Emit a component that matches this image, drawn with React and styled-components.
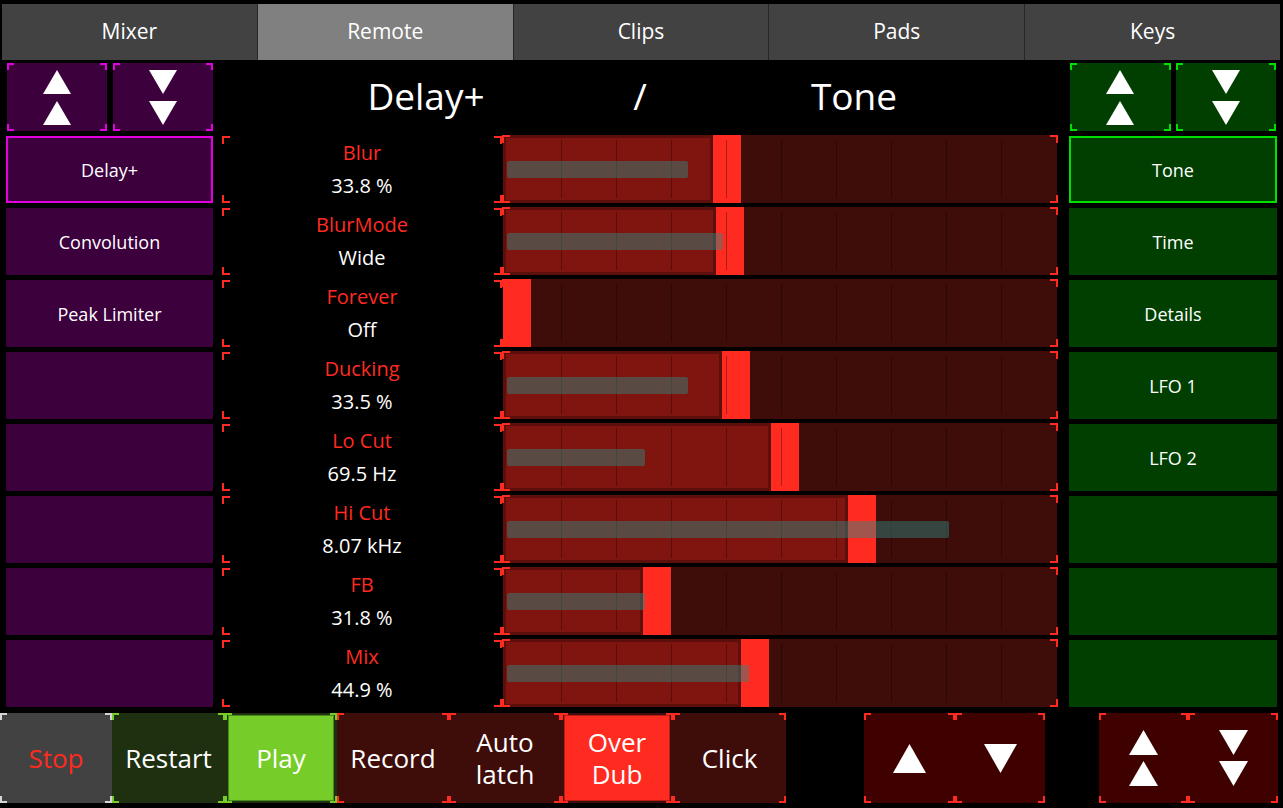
import React from 'react';
import styled, { createGlobalStyle, css } from 'styled-components';

const GlobalStyle = createGlobalStyle`
  html, body {
    margin: 0;
    padding: 0;
    background: #000;
  }
  body {
    font-family: "Open Sans", "DejaVu Sans", sans-serif;
    color: #fff;
    overflow: hidden;
  }
`;

const RED = '#ff2a20';
const MAGENTA = '#e000e0';
const GREEN = '#00e000';

// corner brackets drawn as background gradients
const brackets = (color, len = 8, th = 2) => css`
  background-image:
    linear-gradient(${color}, ${color}), linear-gradient(${color}, ${color}),
    linear-gradient(${color}, ${color}), linear-gradient(${color}, ${color}),
    linear-gradient(${color}, ${color}), linear-gradient(${color}, ${color}),
    linear-gradient(${color}, ${color}), linear-gradient(${color}, ${color});
  background-size:
    ${len}px ${th}px, ${th}px ${len}px, ${len}px ${th}px, ${th}px ${len}px,
    ${len}px ${th}px, ${th}px ${len}px, ${len}px ${th}px, ${th}px ${len}px;
  background-position:
    left top, left top, right top, right top,
    left bottom, left bottom, right bottom, right bottom;
  background-repeat: no-repeat;
`;

const Page = styled.div`
  width: 1283px;
  height: 808px;
  display: flex;
  flex-direction: column;
`;

const TabBar = styled.div`
  display: grid;
  grid-template-columns: repeat(5, 1fr);
  gap: 1px;
  height: 56px;
  margin: 4px 3px 0 2px;
  background: #262626;
`;

const Tab = styled.div`
  display: flex;
  align-items: center;
  justify-content: center;
  background: ${p => (p.$active ? '#808080' : '#424242')};
  font-size: 21px;
  padding-bottom: 2px;
`;

const Main = styled.div`
  display: grid;
  grid-template-columns: 207px 856px 208px;
  grid-template-rows: 68px repeat(8, 67px);
  row-gap: 5px;
  padding: 3px 0 0 6px;
`;

const NavPair = styled.div`
  display: grid;
  grid-template-columns: 1fr 1fr;
  gap: ${p => p.$gap}px;
  padding-left: 1px;
  padding-right: ${p => (p.$right ? 1 : 0)}px;
`;

const NavButton = styled.div`
  display: flex;
  align-items: center;
  justify-content: center;
  background-color: ${p => p.$bg};
  ${p => brackets(p.$edge, 7, 2)}
`;

const Header = styled.div`
  display: grid;
  grid-template-columns: repeat(3, 214px);
  justify-content: center;
  align-items: center;
  padding: 0 11px 4px 9px;
  font-size: 37px;
  text-align: center;
`;

const ListItem = styled.div`
  display: flex;
  align-items: center;
  justify-content: center;
  background: ${p => p.$bg};
  border: 2px solid ${p => (p.$selected ? p.$edge : 'transparent')};
  font-size: 18px;
`;

const ParamRow = styled.div`
  display: grid;
  grid-template-columns: 280px 1fr;
  padding: 0 11px 0 9px;
`;

const Label = styled.div`
  display: flex;
  flex-direction: column;
  align-items: center;
  justify-content: center;
  gap: 6px;
  padding-bottom: 2px;
  ${brackets(RED, 8, 2)}
`;

const ParamName = styled.div`
  color: ${RED};
  font-size: 20px;
  line-height: 27px;
`;

const ParamValue = styled.div`
  font-size: 20px;
  line-height: 27px;
`;

const SliderCell = styled.div`
  position: relative;
  padding: 0 1px;
  margin-top: -1px;

  &::after {
    content: '';
    position: absolute;
    inset: 0;
    pointer-events: none;
    ${brackets(RED, 8, 2)}
  }
`;

const Track = styled.div`
  position: relative;
  height: 100%;
  background: #3e0c09;
  overflow: hidden;
`;

const Fill = styled.div`
  position: absolute;
  left: 0;
  top: 0;
  bottom: 0;
  background: #801510;
  box-shadow: inset 0 0 0 3px #5c0f0b;
`;

const Handle = styled.div`
  position: absolute;
  top: 0;
  bottom: 0;
  width: 28px;
  background: ${RED};
`;

const Ticks = styled.div`
  position: absolute;
  top: 5px;
  bottom: 5px;
  left: 4px;
  right: 3px;
  background: repeating-linear-gradient(
    90deg,
    transparent 0,
    transparent 54px,
    rgba(0, 0, 0, 0.32) 54px,
    rgba(0, 0, 0, 0.32) 55px
  );
`;

const Mod = styled.div`
  position: absolute;
  left: 4px;
  top: 26px;
  height: 17px;
  border-radius: 2px;
  background: rgba(44, 140, 134, 0.45);
`;

const BottomBar = styled.div`
  display: flex;
  height: 90px;
  margin-top: 6px;
`;

const Group = styled.div`
  display: flex;
  margin-left: ${p => p.$offset || 0}px;
`;

const TransportButton = styled.div`
  width: ${p => p.$w || 112}px;
  display: flex;
  padding: 2px 3px;
  box-sizing: border-box;
  background-color: ${p => p.$bg};
  ${p => brackets(p.$edge, 7, 2)}
`;

const Face = styled.div`
  flex: 1;
  display: flex;
  align-items: center;
  justify-content: center;
  text-align: center;
  font-size: 26px;
  line-height: 32px;
  color: ${p => p.$color || '#fff'};
  background: ${p => p.$lit || 'transparent'};
  border: 1px solid ${p => p.$rim || 'transparent'};
`;

const Arrows = ({ up, double, w = 28, h = 24, gap = 7 }) => {
  const tri = y =>
    up
      ? `${w / 2},${y} ${w},${y + h} 0,${y + h}`
      : `0,${y} ${w},${y} ${w / 2},${y + h}`;
  const total = double ? h * 2 + gap : h;
  return (
    <svg width={w} height={total} viewBox={`0 0 ${w} ${total}`}>
      <polygon points={tri(0)} fill="#fff" />
      {double && <polygon points={tri(h + gap)} fill="#fff" />}
    </svg>
  );
};

const params = [
  { name: 'Blur', value: '33.8 %', handle: 210, mod: 181 },
  { name: 'BlurMode', value: 'Wide', handle: 213, mod: 216 },
  { name: 'Forever', value: 'Off', handle: 0, mod: 0 },
  { name: 'Ducking', value: '33.5 %', handle: 219, mod: 181 },
  { name: 'Lo Cut', value: '69.5 Hz', handle: 268, mod: 138 },
  { name: 'Hi Cut', value: '8.07 kHz', handle: 345, mod: 442 },
  { name: 'FB', value: '31.8 %', handle: 140, mod: 138 },
  { name: 'Mix', value: '44.9 %', handle: 238, mod: 242 },
];

const devices = ['Delay+', 'Convolution', 'Peak Limiter', '', '', '', '', ''];
const pages = ['Tone', 'Time', 'Details', 'LFO 1', 'LFO 2', '', '', ''];
const tabs = ['Mixer', 'Remote', 'Clips', 'Pads', 'Keys'];

const PURPLE = '#3c003c';
const DKGREEN = '#003f00';
const DKRED = '#3e0c09';
const NAVRED = '#3f0000';

export default function App() {
  return (
    <Page>
      <GlobalStyle />
      <TabBar>
        {tabs.map(t => (
          <Tab key={t} $active={t === 'Remote'}>{t}</Tab>
        ))}
      </TabBar>

      <Main>
        <NavPair $gap={6}>
          <NavButton $bg={PURPLE} $edge={MAGENTA}>
            <Arrows up double />
          </NavButton>
          <NavButton $bg={PURPLE} $edge={MAGENTA}>
            <Arrows double />
          </NavButton>
        </NavPair>
        <Header>
          <span>Delay+</span>
          <span>/</span>
          <span>Tone</span>
        </Header>
        <NavPair $gap={5} $right>
          <NavButton $bg={DKGREEN} $edge={GREEN}>
            <Arrows up double />
          </NavButton>
          <NavButton $bg={DKGREEN} $edge={GREEN}>
            <Arrows double />
          </NavButton>
        </NavPair>

        {params.map((p, i) => (
          <React.Fragment key={p.name}>
            <ListItem $bg={PURPLE} $edge={MAGENTA} $selected={i === 0}>
              {devices[i]}
            </ListItem>
            <ParamRow>
              <Label>
                <ParamName>{p.name}</ParamName>
                <ParamValue>{p.value}</ParamValue>
              </Label>
              <SliderCell>
                <Track>
                  <Fill style={{ width: p.handle }} />
                  <Handle style={{ left: p.handle }} />
                  <Ticks />
                  {p.mod > 0 && <Mod style={{ width: p.mod }} />}
                </Track>
              </SliderCell>
            </ParamRow>
            <ListItem $bg={DKGREEN} $edge={GREEN} $selected={i === 0}>
              {pages[i]}
            </ListItem>
          </React.Fragment>
        ))}
      </Main>

      <BottomBar>
        <Group>
          <TransportButton $bg="#424242" $edge="#d6d6d6">
            <Face $color={RED}>Stop</Face>
          </TransportButton>
          <TransportButton $w={113} $bg="#1e300f" $edge="#76cc28">
            <Face>Restart</Face>
          </TransportButton>
          <TransportButton $bg="#1e300f" $edge="#76cc28">
            <Face $lit="#76cc28" $rim="#4b8a1c">Play</Face>
          </TransportButton>
          <TransportButton $bg={DKRED} $edge={RED}>
            <Face>Record</Face>
          </TransportButton>
          <TransportButton $bg={DKRED} $edge={RED}>
            <Face>Auto<br />latch</Face>
          </TransportButton>
          <TransportButton $bg={DKRED} $edge={RED}>
            <Face $lit={RED} $rim="#b81e16">Over<br />Dub</Face>
          </TransportButton>
          <TransportButton $w={113} $bg={DKRED} $edge={RED}>
            <Face>Click</Face>
          </TransportButton>
        </Group>
        <Group $offset={78}>
          <TransportButton $w={91} $bg={NAVRED} $edge={RED}>
            <Face><Arrows up w={33} h={29} /></Face>
          </TransportButton>
          <TransportButton $w={90} $bg={NAVRED} $edge={RED}>
            <Face><Arrows w={33} h={29} /></Face>
          </TransportButton>
        </Group>
        <Group $offset={54}>
          <TransportButton $w={89} $bg={NAVRED} $edge={RED}>
            <Face><Arrows up double w={29} h={25} gap={6} /></Face>
          </TransportButton>
          <TransportButton $w={90} $bg={NAVRED} $edge={RED}>
            <Face><Arrows double w={29} h={25} gap={6} /></Face>
          </TransportButton>
        </Group>
      </BottomBar>
    </Page>
  );
}
